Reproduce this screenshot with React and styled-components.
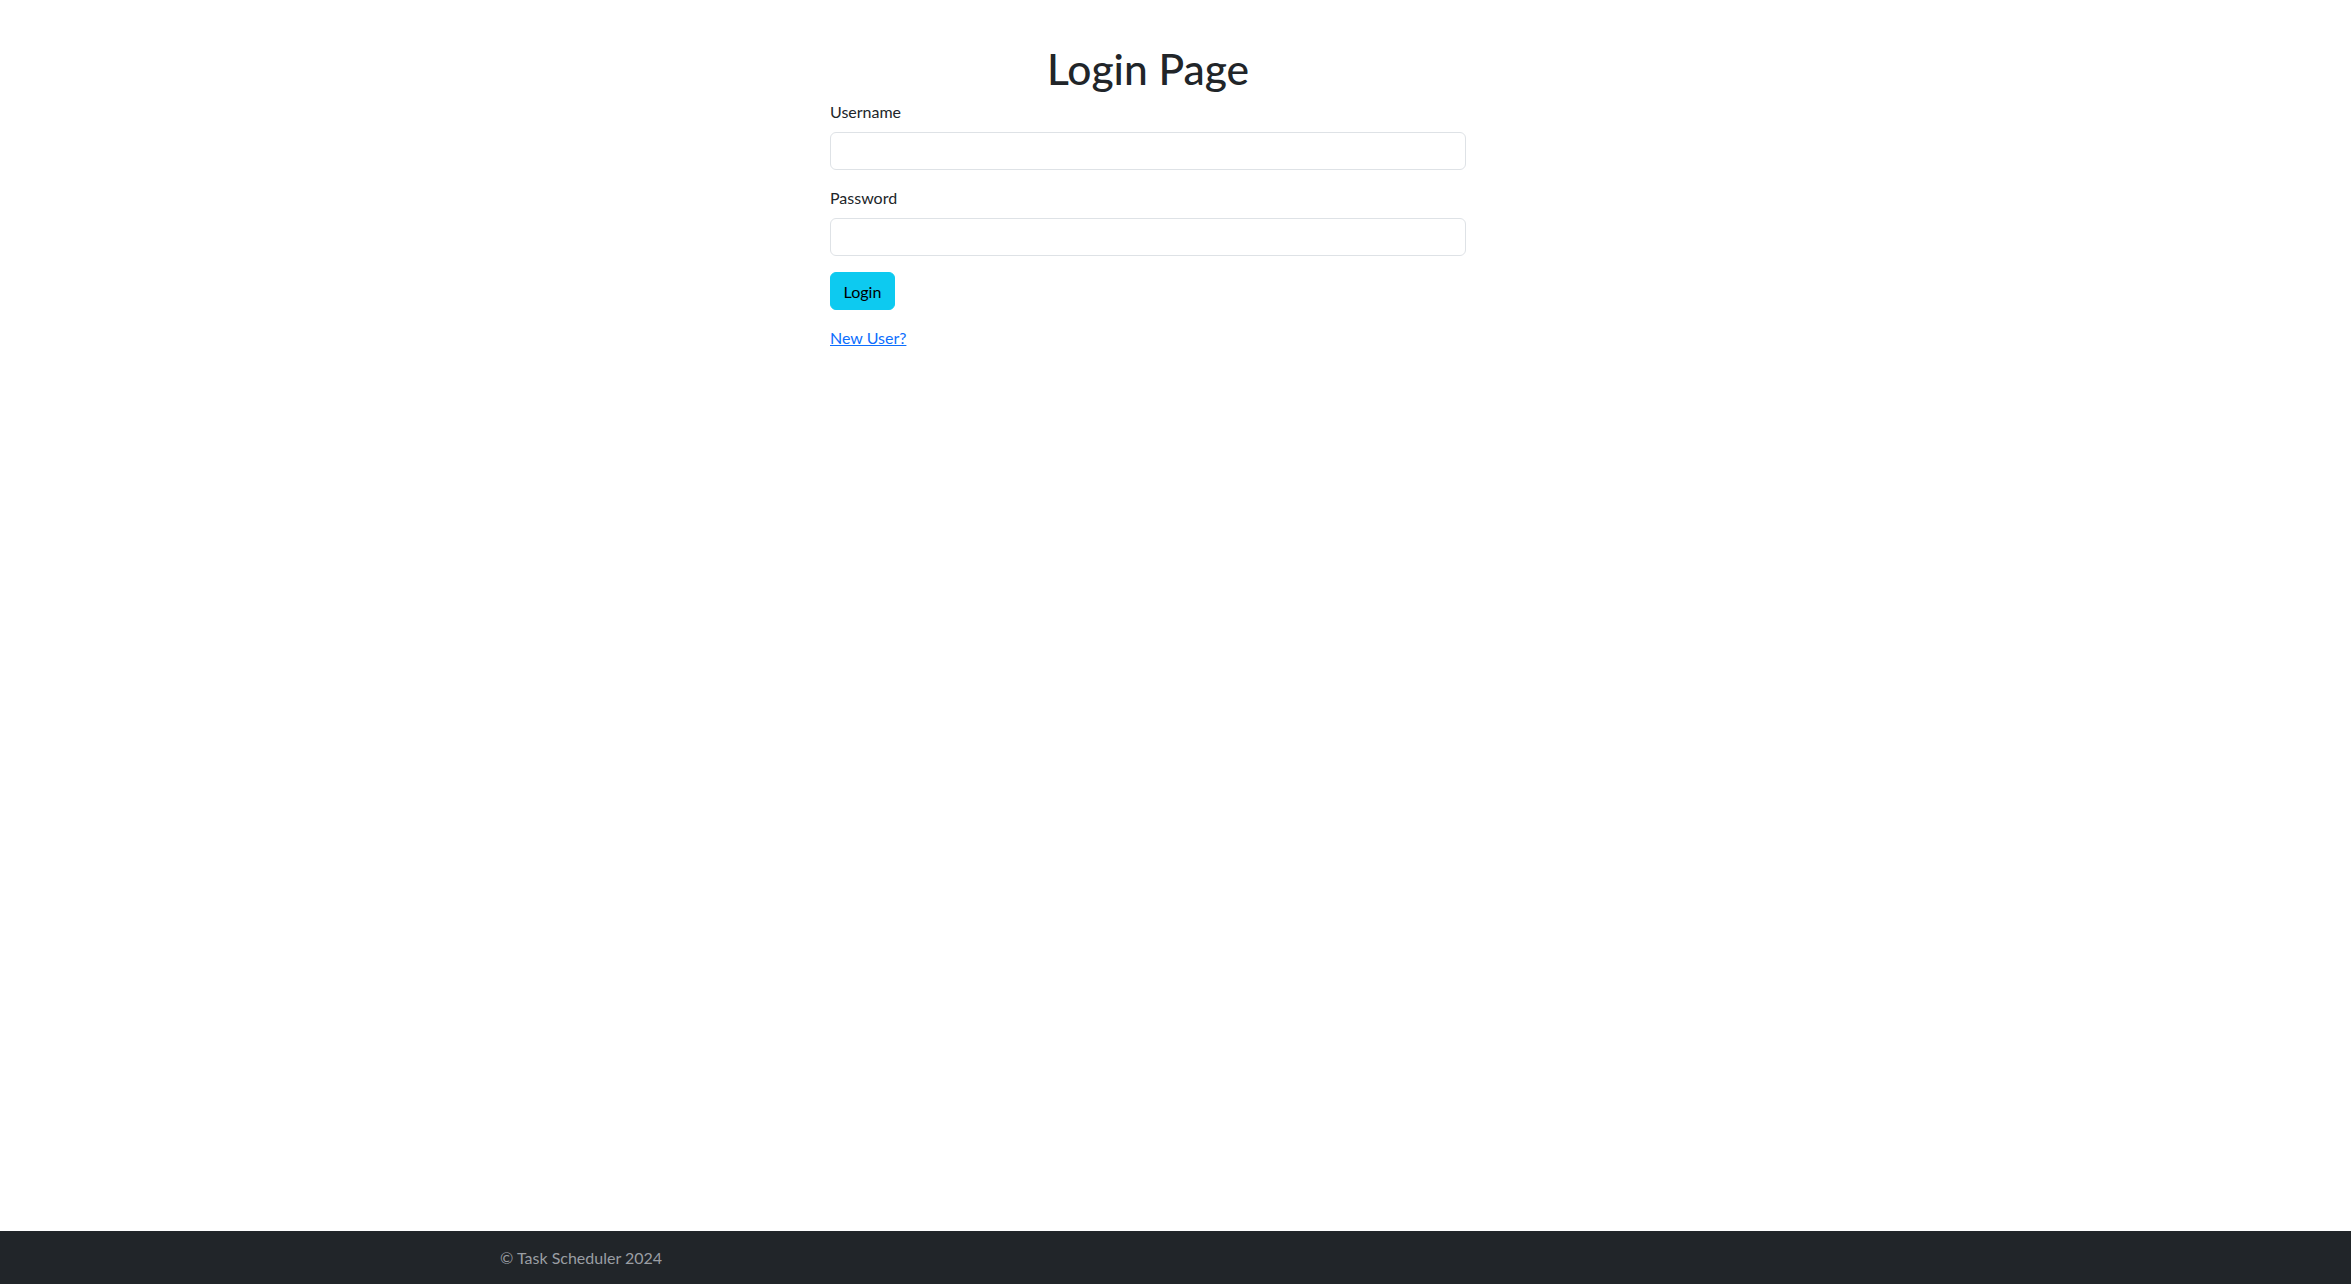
import styled, { createGlobalStyle } from 'styled-components'

const GlobalStyle = createGlobalStyle`
  html, body {
    margin: 0;
    padding: 0;
    background: #fff;
  }
  body {
    font-family: Lato, "Liberation Sans", sans-serif;
    color: #212529;
  }
  * {
    box-sizing: border-box;
  }
`

const App = () => {
    return (<Page>
        <GlobalStyle />
        <Main>
            <Container>
                <FormColumn>
                    <Title>Login Page</Title>
                    <Field>
                        <Label htmlFor="username">Username</Label>
                        <Input id="username" type="text" />
                    </Field>
                    <Field>
                        <Label htmlFor="password">Password</Label>
                        <Input id="password" type="password" />
                    </Field>
                    <Button type="button">Login</Button>
                    <LinkRow>
                        <Link href="#">New User?</Link>
                    </LinkRow>
                </FormColumn>
            </Container>
        </Main>
        <Footer>
            <FooterInner>© Task Scheduler 2024</FooterInner>
        </Footer>
    </Page>)
}

const Page = styled.div`
  height: 100vh;
  display: flex;
  flex-direction: column;
`

const Main = styled.main`
  flex: 1;
`

const Container = styled.div`
  width: 1351px;
  margin: 0 auto;
`

const FormColumn = styled.div`
  width: 636px;
  margin-left: 330px;
  padding-top: 45px;
  display: flex;
  flex-direction: column;
  align-items: flex-start;
`

const Title = styled.h1`
  align-self: stretch;
  margin: 0 0 7px;
  font-size: 42.5px;
  font-weight: 500;
  line-height: 48px;
  text-align: center;
`

const Field = styled.div`
  align-self: stretch;
  display: flex;
  flex-direction: column;
  margin-bottom: 16px;
`

const Label = styled.label`
  font-size: 16px;
  line-height: 24px;
  margin-bottom: 8px;
`

const Input = styled.input`
  height: 38px;
  width: 100%;
  padding: 6px 12px;
  font-size: 16px;
  border: 1px solid #dee2e6;
  border-radius: 6px;
  background: #fff;
  outline: none;
`

const Button = styled.button`
  height: 38px;
  width: 65px;
  padding: 0;
  font-family: inherit;
  font-size: 16px;
  color: #000;
  background: #0dcaf0;
  border: 1px solid #0dcaf0;
  border-radius: 6px;
  cursor: pointer;
`

const LinkRow = styled.p`
  margin: 16px 0 0;
  font-size: 16px;
  line-height: 24px;
`

const Link = styled.a`
  color: #0d6efd;
  text-decoration: underline;
`

const Footer = styled.footer`
  flex: 0 0 53px;
  background: #212529;
  display: flex;
  align-items: center;
`

const FooterInner = styled.div`
  width: 1351px;
  margin: 0 auto;
  font-size: 16px;
  color: #9a9ea3;
`

export default App
